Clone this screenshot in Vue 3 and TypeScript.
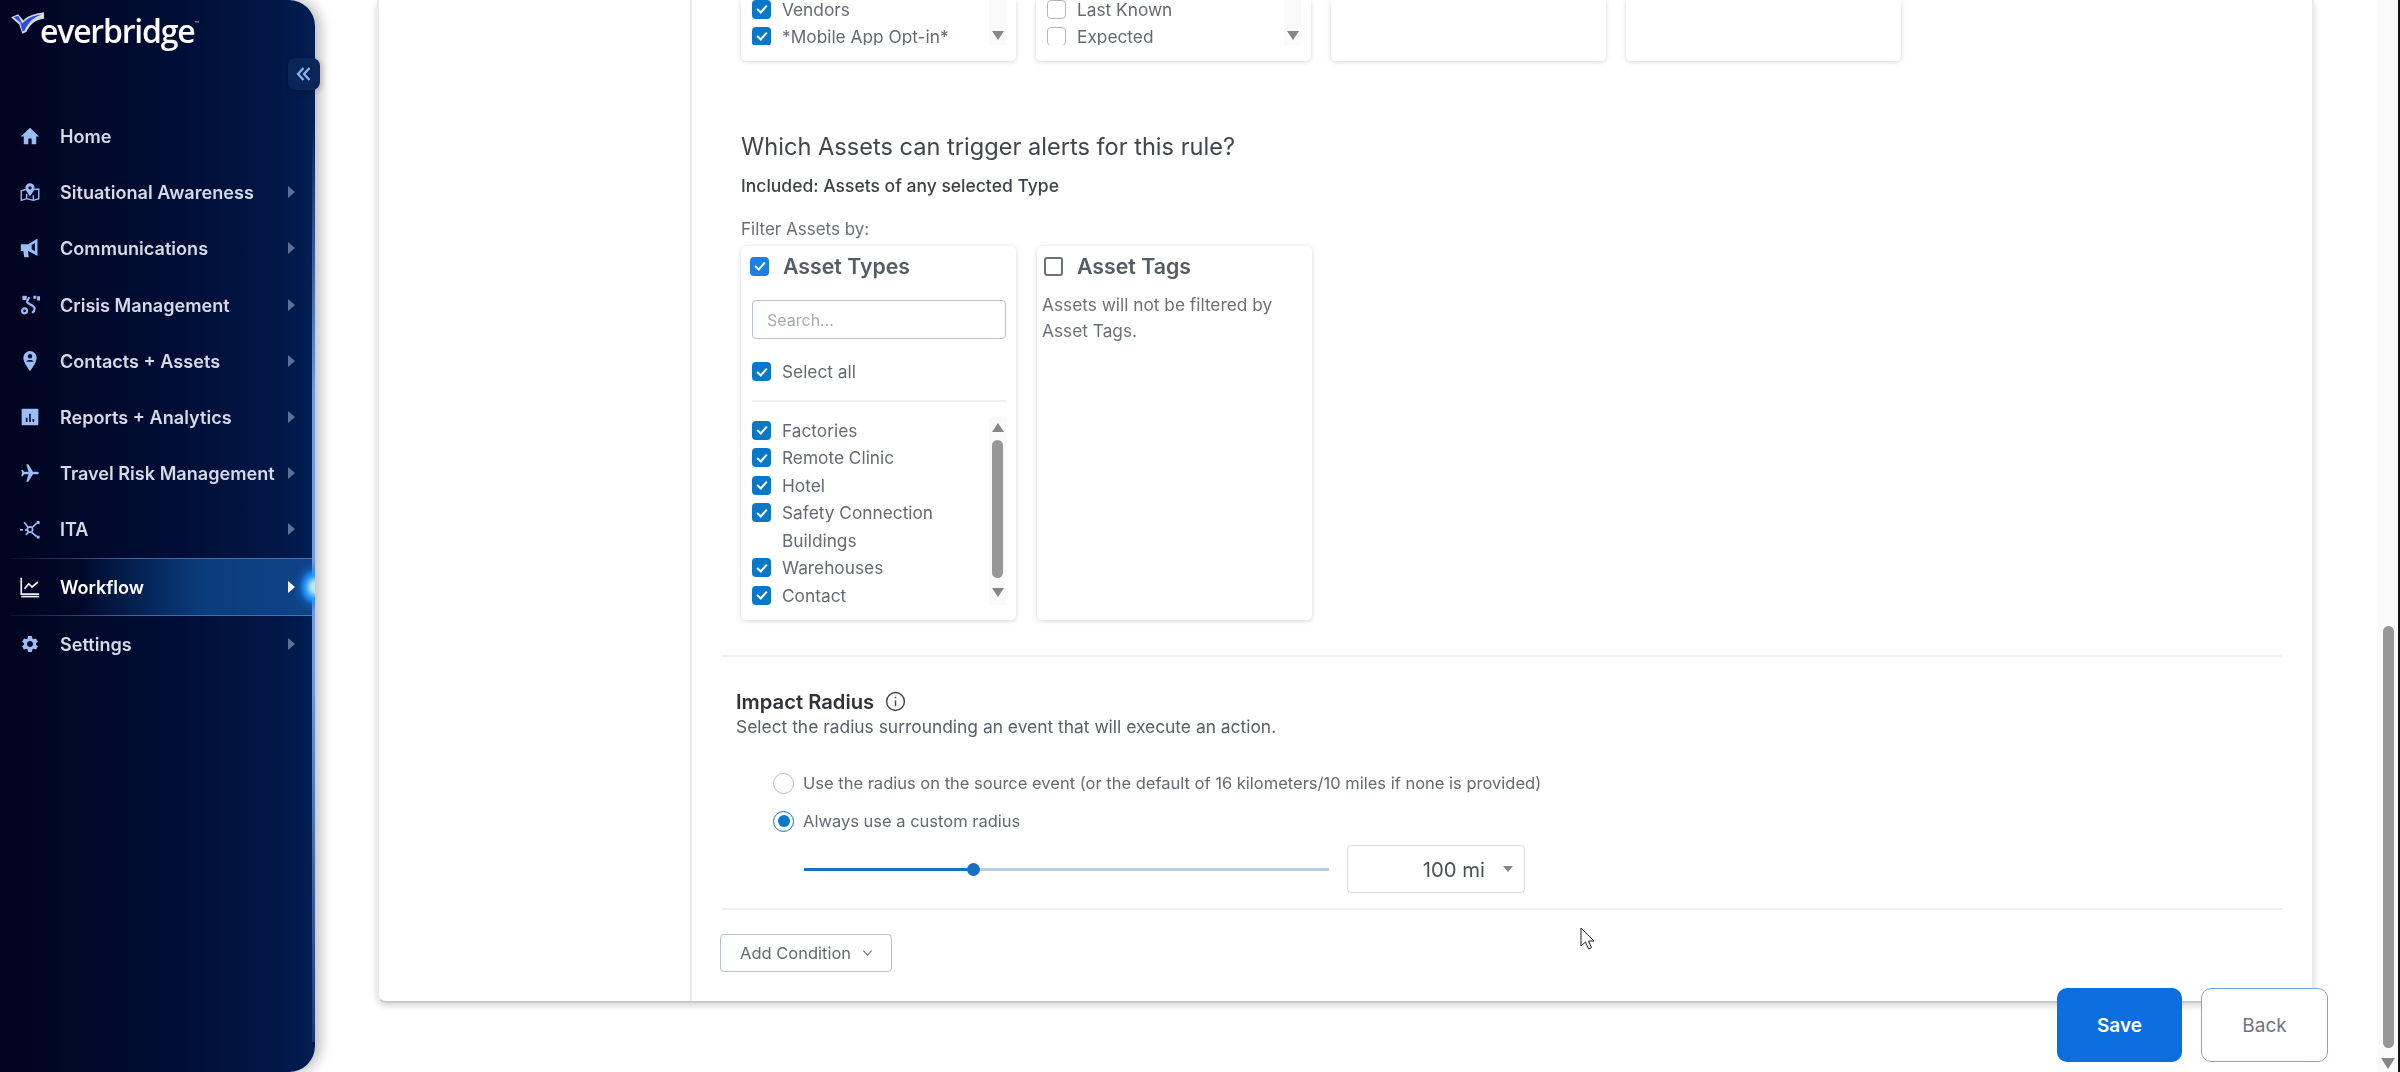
<script setup lang="ts">
interface Shape { d: string; kind: string }
interface NavItem { name: string; arrow: boolean; active?: boolean; shapes: Shape[] }

const gear =
  'M19.14 12.94c.04-.3.06-.61.06-.94 0-.32-.02-.64-.07-.94l2.03-1.58a.49.49 0 0 0 .12-.61l-1.92-3.32a.488.488 0 0 0-.59-.22l-2.39.96c-.5-.38-1.03-.7-1.62-.94l-.36-2.54a.484.484 0 0 0-.48-.41h-3.84c-.24 0-.43.17-.47.41l-.36 2.54c-.59.24-1.13.57-1.62.94l-2.39-.96c-.22-.08-.47 0-.59.22L2.74 8.87c-.12.21-.08.47.12.61l2.03 1.58c-.05.3-.09.63-.09.94s.02.64.07.94l-2.03 1.58a.49.49 0 0 0-.12.61l1.92 3.32c.12.22.37.29.59.22l2.39-.96c.5.38 1.03.7 1.62.94l.36 2.54c.05.24.24.41.48.41h3.84c.24 0 .44-.17.47-.41l.36-2.54c.59-.24 1.13-.56 1.62-.94l2.39.96c.22.08.47 0 .59-.22l1.92-3.32c.12-.22.07-.47-.12-.61l-2.01-1.58zM12 15.6c-1.98 0-3.6-1.62-3.6-3.6s1.62-3.6 3.6-3.6 3.6 1.62 3.6 3.6-1.62 3.6-3.6 3.6z'

const nav: NavItem[] = [
  { name: 'Home', arrow: false, shapes: [{ kind: 'fill', d: 'M10 22v-7h4v7h5.500v-9.500H23L12 2 1 12.500h3.500V22z' }] },
  {
    name: 'Situational Awareness', arrow: true,
    shapes: [
      { kind: 'line thin-line', d: 'M7 9 1.500 10.500V22L8 20l8 2 6.500-2V8.500L17 9M8 20v-6M16 22v-6' },
      { kind: 'fill', d: 'M12 1.500a5.500 5.500 0 0 0-5.500 5.500c0 3.800 5.500 10 5.500 10s5.500-6.200 5.500-10A5.500 5.500 0 0 0 12 1.500z' },
      { kind: 'hole', d: 'M12 5a2 2 0 1 0 0 4 2 2 0 0 0 0-4z' }
    ]
  },
  {
    name: 'Communications', arrow: true,
    shapes: [
      { kind: 'fill', d: 'M1 7.500h9L21 .5v21L10 15.500H9.500l1 7.500H5l-1-7.500H1z' },
      { kind: 'hole', d: 'M18 6v10l-4-2.500V8.500z' }
    ]
  },
  {
    name: 'Crisis Management', arrow: true,
    shapes: [
      { kind: 'line thick', d: 'M11 2.500 8.500 8c-1 2.500 9 4 9 8.500 0 2-1.500 4-3 5' },
      { kind: 'line thick', d: 'M5.500 16a3 3 0 1 0 .01 6.010A3 3 0 0 0 5.500 16z' },
      { kind: 'fill', d: 'M16 1h3.500v3.500H16zM20.500 1.500H24v5h-3.500zM3 1.500a2.500 2.500 0 1 0 5 0z' },
      { kind: 'fill', d: 'M3 1h5v5H3z' }
    ]
  },
  {
    name: 'Contacts + Assets', arrow: true,
    shapes: [
      { kind: 'fill', d: 'M12 0a8 8 0 0 0-8 8c0 6 8 16 8 16s8-10 8-16a8 8 0 0 0-8-8z' },
      { kind: 'hole', d: 'M12 3.500a2.700 2.700 0 1 0 0 5.400 2.700 2.700 0 0 0 0-5.400zM7.500 13c.8-3 8.200-3 9 0z' }
    ]
  },
  {
    name: 'Reports + Analytics', arrow: true,
    shapes: [
      { kind: 'fill', d: 'M3 2h18a1 1 0 0 1 1 1v18a1 1 0 0 1-1 1H3a1 1 0 0 1-1-1V3a1 1 0 0 1 1-1z' },
      { kind: 'hole', d: 'M7 13h2v5H7zM11 8h2v10h-2zM15 14.500h2V18h-2z' }
    ]
  },
  {
    name: 'Travel Risk Management', arrow: true,
    shapes: [{ kind: 'fill rot', d: 'M22.500 16.500v-2.500L13.500 8.500V3c0-.83-.67-1.500-1.500-1.500s-1.500.67-1.500 1.500v5.500l-9 5.500v2.500l9-2.800V19l-2.500 1.800v1.700l4-1 4 1v-1.700L13.500 19v-5.300z' }]
  },
  {
    name: 'ITA', arrow: true,
    shapes: [
      { kind: 'line', d: 'M0 13h3.500M6 13h2.500M9.500 9.500 5 4M14 16l6 5M14.500 10.500 20 5M10 16l-3 3' },
      { kind: 'line', d: 'M12 9.500a3.200 3.200 0 1 0 .01 6.400 3.200 3.200 0 0 0-.01-6.400z' },
      { kind: 'fill', d: 'M20 2.500h3.500V6H20zM20 20h3.500v3.500H20z' }
    ]
  },
  {
    name: 'Workflow', arrow: true, active: true,
    shapes: [
      { kind: 'line', d: 'M1.500 1v19.500H23' },
      { kind: 'line', d: 'M5.500 14l5-6 4 4 7-6' },
      { kind: 'line', d: 'M1.500 23.500H23' }
    ]
  },
  { name: 'Settings', arrow: true, shapes: [{ kind: 'fill', d: gear }] }
]

const topCards = [
  { rows: ['Vendors', '*Mobile App Opt-in*'], on: true },
  { rows: ['Last Known', 'Expected'], on: false }
]

const assetTypes = ['Factories', 'Remote Clinic', 'Hotel', 'Safety Connection Buildings', 'Warehouses', 'Contact']
</script>

<template>
  <div class="page">
    <aside class="side">
      <div class="logo">
        <svg class="logo-mark" viewBox="0 0 32 22" aria-hidden="true">
          <path d="M0 5l7-3 5 6C15 4 22 1.500 32 0l0 6.500C24 7.500 19 11 15 19l-4 2-3-9z" fill="#ffffff" opacity=".85" />
          <path d="M2.500 5 7 3.500l4 7.500C15 6 22 3 30 2 22 5 17 9.500 13 18l-2 .5L9 10z" fill="#2a4fe0" />
        </svg>
        <span class="logo-text">everbridge</span><span class="logo-tm">™</span>
      </div>
      <button class="collapse" type="button" aria-label="Collapse">
        <svg viewBox="0 0 16 16" aria-hidden="true">
          <path d="M7.500 2 2 8l5.500 6M13.500 2 8 8l5.500 6" />
        </svg>
      </button>
      <nav class="nav">
        <div v-for="item in nav" :key="item.name" class="nav-row" :class="{ active: item.active }">
          <svg class="nav-icon" viewBox="0 0 24 24" aria-hidden="true">
            <path v-for="(s, i) in item.shapes" :key="i" :d="s.d" :class="s.kind" />
          </svg>
          <span class="nav-label">{{ item.name }}</span>
          <span v-if="item.arrow" class="nav-arrow"></span>
          <span v-if="item.active" class="glow"></span>
        </div>
      </nav>
    </aside>

    <main class="main">
      <section class="card">
        <div class="card-left"></div>
        <div class="content">
          <div class="top-row">
            <div v-for="(c, i) in topCards" :key="i" class="panel top-panel">
              <div class="clip">
                <div class="clip-rows">
                  <label v-for="r in c.rows" :key="r" class="row">
                    <span class="cb" :class="{ on: c.on, soft: !c.on }"></span>{{ r }}
                  </label>
                </div>
                <div class="bar short">
                  <span class="tri down"></span>
                </div>
              </div>
            </div>
            <div class="panel top-panel"></div>
            <div class="panel top-panel"></div>
          </div>

          <h2 class="question">Which Assets can trigger alerts for this rule?</h2>
          <p class="included">Included: Assets of any selected Type</p>
          <p class="filter">Filter Assets by:</p>

          <div class="asset-row">
            <div class="panel asset-panel">
              <div class="head">
                <span class="cb on bright"></span>
                <span class="head-text">Asset Types</span>
              </div>
              <input class="search" type="text" placeholder="Search..." />
              <label class="row all"><span class="cb on"></span>Select all</label>
              <div class="thin"></div>
              <div class="list">
                <div class="rows">
                  <label v-for="a in assetTypes" :key="a" class="row item">
                    <span class="cb on"></span><span class="item-text">{{ a }}</span>
                  </label>
                </div>
                <div class="bar">
                  <span class="tri up"></span>
                  <span class="thumb"></span>
                  <span class="tri down"></span>
                </div>
              </div>
            </div>
            <div class="panel asset-panel">
              <div class="head tags">
                <span class="cb off"></span>
                <span class="head-text">Asset Tags</span>
              </div>
              <p class="tags-note">Assets will not be filtered by Asset Tags.</p>
            </div>
          </div>

          <div class="rule first"></div>

          <div class="impact-title">
            <span>Impact Radius</span>
            <svg class="info" viewBox="0 0 20 20" aria-hidden="true">
              <circle cx="10" cy="10" r="8.500" />
              <path d="M10 9v5.500M10 5.500v1.500" />
            </svg>
          </div>
          <p class="impact-sub">Select the radius surrounding an event that will execute an action.</p>

          <label class="radio-row r1"><span class="radio"></span>Use the radius on the source event (or the default of 16 kilometers/10 miles if none is provided)</label>
          <label class="radio-row r2"><span class="radio sel"></span>Always use a custom radius</label>

          <div class="slider-row">
            <div class="slider"><span class="fill"></span><span class="knob"></span></div>
            <div class="select"><span class="select-val">100 mi</span><span class="tri down small"></span></div>
          </div>

          <div class="rule second"></div>

          <button class="add" type="button">
            <span>Add Condition</span>
            <svg viewBox="0 0 12 8" aria-hidden="true"><path d="M1.500 1.500 6 6.500l4.500-5" /></svg>
          </button>
        </div>
      </section>

      <div class="page-bar">
        <span class="page-track"><span class="page-thumb"></span><span class="tri down large"></span></span>
        <span class="page-edge"></span>
      </div>

      <button class="btn save" type="button">Save</button>
      <button class="btn back" type="button">Back</button>

      <svg class="cursor" viewBox="0 0 14 24" aria-hidden="true">
        <path d="M1 1v18l4.500-4 3 7 3-1.300-3-6.700H14z" fill="#fff" stroke="#222" stroke-width="1" />
      </svg>
    </main>
  </div>
</template>

<style>
html, body { margin: 0; background: #fff; overflow: hidden; }
</style>

<style scoped>
.page {
  display: flex;
  width: 2400px;
  height: 1072px;
  overflow: hidden;
  font-family: Inter, "Liberation Sans", sans-serif;
  color: #5f6670;
  position: relative;
  filter: blur(.45px);
}

/* sidebar */
.side {
  position: relative;
  flex: none;
  width: 315px;
  height: 1072px;
  box-sizing: border-box;
  border-radius: 0 26px 26px 0;
  background: linear-gradient(90deg, #00041f 0%, #000c33 50%, #011746 88%, #021e54 100%);
  box-shadow: 5px 0 14px rgba(0, 0, 0, .28);
  z-index: 2;
}
.side::after {
  content: "";
  position: absolute;
  right: 0;
  top: 120px;
  bottom: 30px;
  width: 3px;
  background: linear-gradient(180deg, rgba(90, 130, 210, 0) 0%, #6d9be6 30%, #6d9be6 60%, rgba(90, 130, 210, .25) 100%);
}
.logo {
  height: 108px;
  box-sizing: border-box;
  padding: 8px 0 0 11px;
  display: flex;
  align-items: flex-start;
}
.logo-mark { width: 33px; height: 23px; margin-top: 4px; flex: none; }
.logo-text {
  margin-left: -4px;
  margin-top: 3px;
  font-family: "Open Sans", sans-serif;
  font-size: 32px;
  font-weight: 600;
  line-height: 40px;
  letter-spacing: -1.200px;
  color: #fff;
}
.logo-tm { font-size: 7px; color: #ccd; margin-top: 12px; }
.collapse {
  position: absolute;
  left: 288px;
  top: 58px;
  width: 32px;
  height: 32px;
  padding: 8px;
  border: 0;
  border-radius: 8px;
  background: #0a2658;
  box-shadow: 2px 2px 6px rgba(0, 0, 0, .2);
  z-index: 3;
}
.collapse svg { display: block; width: 100%; height: 100%; fill: none; stroke: #8fb5f2; stroke-width: 2.200; }

.nav-row {
  position: relative;
  display: flex;
  align-items: center;
  height: 56.200px;
  padding-left: 20px;
  box-sizing: border-box;
  color: #d5dbe6;
}
.nav-icon { width: 20px; height: 20px; flex: none; overflow: visible; }
.nav-icon .fill { fill: #9cbcf2; fill-rule: evenodd; }
.nav-icon .hole { fill: #021440; }
.nav-icon .line { fill: none; stroke: #9cbcf2; stroke-width: 2; }
.nav-icon .thick { stroke-width: 2.600; }
.nav-icon .thin-line { stroke-width: 1.700; }
.nav-icon .rot { transform: rotate(90deg); transform-origin: 12px 12px; }
.nav-label { margin-left: 20px; font-size: 18.100px; font-weight: 600; white-space: nowrap; }
.nav-arrow {
  position: absolute;
  left: 288px;
  top: 50%;
  margin-top: -6px;
  border-left: 7px solid #5d7096;
  border-top: 6px solid transparent;
  border-bottom: 6px solid transparent;
}
.nav-row.active {
  height: 58px;
  color: #fff;
  background: linear-gradient(90deg, rgba(12, 60, 125, 0) 25%, #0b3c7c 65%, #0e4488 100%);
}
.nav-row.active::before,
.nav-row.active::after {
  content: "";
  position: absolute;
  left: 10px;
  right: 0;
  height: 1px;
  background: linear-gradient(90deg, rgba(70, 110, 170, .1), #41699f 40%, #4a76b0);
}
.nav-row.active::before { top: 0; }
.nav-row.active::after { bottom: 0; }
.nav-row.active .nav-icon .line { stroke: #eef3fb; }
.nav-row.active .nav-arrow { border-left-color: #fff; }
.glow {
  position: absolute;
  right: 0;
  top: 0;
  width: 26px;
  height: 58px;
  background: radial-gradient(ellipse 22px 26px at 100% 50%, #c8f0ff 0%, #b0e4ff 18%, #2498ff 45%, rgba(20, 110, 220, .35) 72%, rgba(20, 110, 220, 0) 100%);
  z-index: 2;
}

/* main */
.main {
  flex: 1;
  display: flex;
  align-items: flex-start;
  padding-left: 62px;
  min-width: 0;
}
.card {
  flex: none;
  display: flex;
  width: 1937px;
  height: 1003px;
  box-sizing: border-box;
  border: 2px solid #eaeaea;
  border-top: 0;
  border-bottom-color: #c9c9c9;
  border-radius: 0 0 9px 9px;
  background: #fff;
  box-shadow: 0 3px 7px rgba(0, 0, 0, .16);
}
.card-left { flex: none; width: 311px; border-right: 2px solid #ececec; }
.content { flex: 1; min-width: 0; display: flex; flex-direction: column; align-items: flex-start; }

.panel {
  flex: none;
  width: 275px;
  box-sizing: border-box;
  border-radius: 5px;
  background: #fff;
  box-shadow: 0 1px 5px rgba(0, 0, 0, .17);
}
.top-row { display: flex; gap: 20px; height: 61px; margin-left: 49px; }
.top-panel { height: 61px; border-radius: 0 0 5px 5px; position: relative; }
.clip { display: flex; height: 45px; overflow: hidden; padding-left: 11px; padding-right: 10px; }
.clip-rows { flex: 1; margin-top: -4.500px; }
.row {
  display: flex;
  align-items: center;
  height: 27px;
  font-size: 17.300px;
  white-space: nowrap;
  color: #636a73;
}
.cb {
  position: relative;
  flex: none;
  width: 19px;
  height: 19px;
  margin-right: 11px;
  box-sizing: border-box;
  border-radius: 4px;
}
.cb.on { background: #0a78c9; }
.cb.on::after {
  content: "";
  position: absolute;
  left: 6.500px;
  top: 3.500px;
  width: 4px;
  height: 8px;
  border: solid #fff;
  border-width: 0 2px 2px 0;
  transform: rotate(42deg);
}
.cb.bright { background: #1c80e2; }
.cb.soft { border: 1.500px solid #b4b8bd; background: #fff; }
.cb.off { border: 2px solid #6d7278; background: #fff; border-radius: 3px; }

.bar {
  flex: none;
  position: relative;
  display: flex;
  flex-direction: column;
  align-items: center;
  justify-content: space-between;
  width: 17px;
  box-sizing: border-box;
  background: #fafafa;
  padding: 5px 0;
}
.bar.short { justify-content: flex-end; padding: 0 0 5px; }
.tri { display: block; width: 0; height: 0; border-left: 6px solid transparent; border-right: 6px solid transparent; }
.tri.down { border-top: 9px solid #868686; }
.tri.up { border-bottom: 9px solid #868686; }
.tri.small { border-left-width: 5px; border-right-width: 5px; border-top-width: 6px; }
.tri.large { border-left-width: 7px; border-right-width: 7px; border-top-width: 11px; }

.question {
  margin: 71px 0 0 49px;
  font-size: 23.600px;
  line-height: 30px;
  font-weight: 400;
  color: #41464d;
  white-space: nowrap;
}
.included {
  margin: 13px 0 0 49px;
  font-size: 17.500px;
  line-height: 22px;
  font-weight: 500;
  color: #3d4248;
  white-space: nowrap;
}
.filter {
  margin: 22px 0 0 49px;
  font-size: 17px;
  line-height: 20px;
  color: #6a7078;
  white-space: nowrap;
}
.asset-row { display: flex; gap: 21px; margin: 7px 0 0 49px; }
.asset-panel { height: 374px; }
.head { display: flex; align-items: center; height: 40px; padding-left: 9px; }
.head.tags { padding-left: 7px; }
.head .cb { margin-right: 14px; }
.head-text { font-size: 21.300px; font-weight: 600; color: #565c64; white-space: nowrap; }
.search {
  display: block;
  box-sizing: border-box;
  width: 254px;
  height: 39px;
  margin: 14px 0 0 11px;
  padding: 0 14px;
  border: 1.500px solid #b6c0cc;
  border-radius: 4px;
  outline: 0;
  font: 16px Inter, sans-serif;
  background: #fff;
}
.search::placeholder { color: #a6acb3; opacity: 1; }
.row.all { margin: 19px 0 0 11px; }
.thin { height: 2px; width: 254px; margin: 15px 0 0 11px; background: #efefef; }
.list { display: flex; margin: 14.500px 0 0 11px; width: 254px; }
.rows { flex: 1; min-width: 0; }
.row.item { align-items: flex-start; height: auto; min-height: 27.500px; }
.row.item .cb { margin-top: 4px; }
.item-text { line-height: 27.500px; white-space: normal; width: 175px; }
.list .bar { width: 17px; height: 188px; padding: 6px 0 5px; justify-content: flex-start; }
.list .bar .thumb { width: 11px; height: 138px; margin-top: 8px; border-radius: 6px; background: #979797; }
.list .bar .tri.down { margin-top: 10px; }
.tags-note {
  margin: 6px 10px 0 5px;
  font-size: 17.300px;
  line-height: 26px;
  color: #6a7078;
}

.rule { height: 2px; background: #eef0f2; margin-left: 30px; width: 1560px; }
.rule.first { margin-top: 35px; }
.rule.second { margin-top: 15px; }

.impact-title {
  display: flex;
  align-items: center;
  gap: 11px;
  margin: 32px 0 0 44px;
  height: 24px;
  font-size: 20.200px;
  font-weight: 600;
  color: #2f3338;
  white-space: nowrap;
}
.info { width: 21px; height: 21px; fill: none; stroke: #41464d; stroke-width: 1.400; }
.impact-sub {
  margin: 3px 0 0 44px;
  font-size: 17.400px;
  line-height: 22px;
  color: #5a6068;
  white-space: nowrap;
}
.radio-row {
  display: flex;
  align-items: center;
  height: 26px;
  margin-left: 81px;
  font-size: 16.500px;
  color: #636a73;
  white-space: nowrap;
}
.radio-row.r1 { margin-top: 32px; }
.radio-row.r2 { margin-top: 12px; }
.radio {
  position: relative;
  flex: none;
  width: 21px;
  height: 21px;
  margin-right: 9px;
  box-sizing: border-box;
  border: 1.500px solid #b9bdc2;
  border-radius: 50%;
  background: #fff;
}
.radio.sel { border-color: #0a78c9; }
.radio.sel::after {
  content: "";
  position: absolute;
  inset: 3.500px;
  border-radius: 50%;
  background: #0a78c9;
}
.slider-row { display: flex; align-items: center; margin: 11px 0 0 112px; height: 48px; }
.slider { position: relative; width: 525px; height: 3px; background: #b9cde2; }
.fill { display: block; width: 169px; height: 3px; background: #1a6fbe; }
.knob {
  position: absolute;
  left: 163px;
  top: -5px;
  width: 13px;
  height: 13px;
  border-radius: 50%;
  background: #1a6fc4;
}
.select {
  display: flex;
  align-items: center;
  justify-content: flex-end;
  box-sizing: border-box;
  width: 178px;
  height: 48px;
  margin-left: 18px;
  padding-right: 11px;
  border: 1.500px solid #d7dadd;
  border-radius: 4px;
  font-size: 20.300px;
  color: #4c5158;
}
.select-val { margin-right: 18px; }
.add {
  display: flex;
  align-items: center;
  box-sizing: border-box;
  width: 172px;
  height: 38px;
  margin: 24px 0 0 28px;
  padding: 0 0 0 19px;
  border: 1.500px solid #b6c0cc;
  border-radius: 4px;
  background: #fff;
  font: 16.500px Inter, sans-serif;
  color: #636a73;
  white-space: nowrap;
}
.add svg { width: 11px; height: 8px; margin-left: 11px; fill: none; stroke: #6a7078; stroke-width: 1.200; }

.page-bar { display: flex; flex: none; margin-left: auto; height: 1072px; }
.page-track {
  display: flex;
  flex-direction: column;
  align-items: center;
  justify-content: flex-end;
  width: 20px;
  background: #fafafa;
  padding-bottom: 3px;
  box-sizing: border-box;
}
.page-thumb { width: 11px; height: 422px; border-radius: 6px; margin-bottom: 10px; background: #979797; }
.page-edge { width: 2px; background: #111; }

.btn {
  position: absolute;
  top: 988px;
  width: 125px;
  height: 74px;
  box-sizing: border-box;
  border-radius: 10px;
  font: 600 19px Inter, sans-serif;
}
.save { left: 2057px; border: 0; background: #0b6fdf; color: #fff; }
.back { left: 2201px; width: 127px; border: 1.500px solid #7da6d8; background: #fff; font-weight: 400; color: #6c757f; }
.cursor { position: absolute; left: 1580px; top: 927px; width: 14px; height: 24px; }
</style>
